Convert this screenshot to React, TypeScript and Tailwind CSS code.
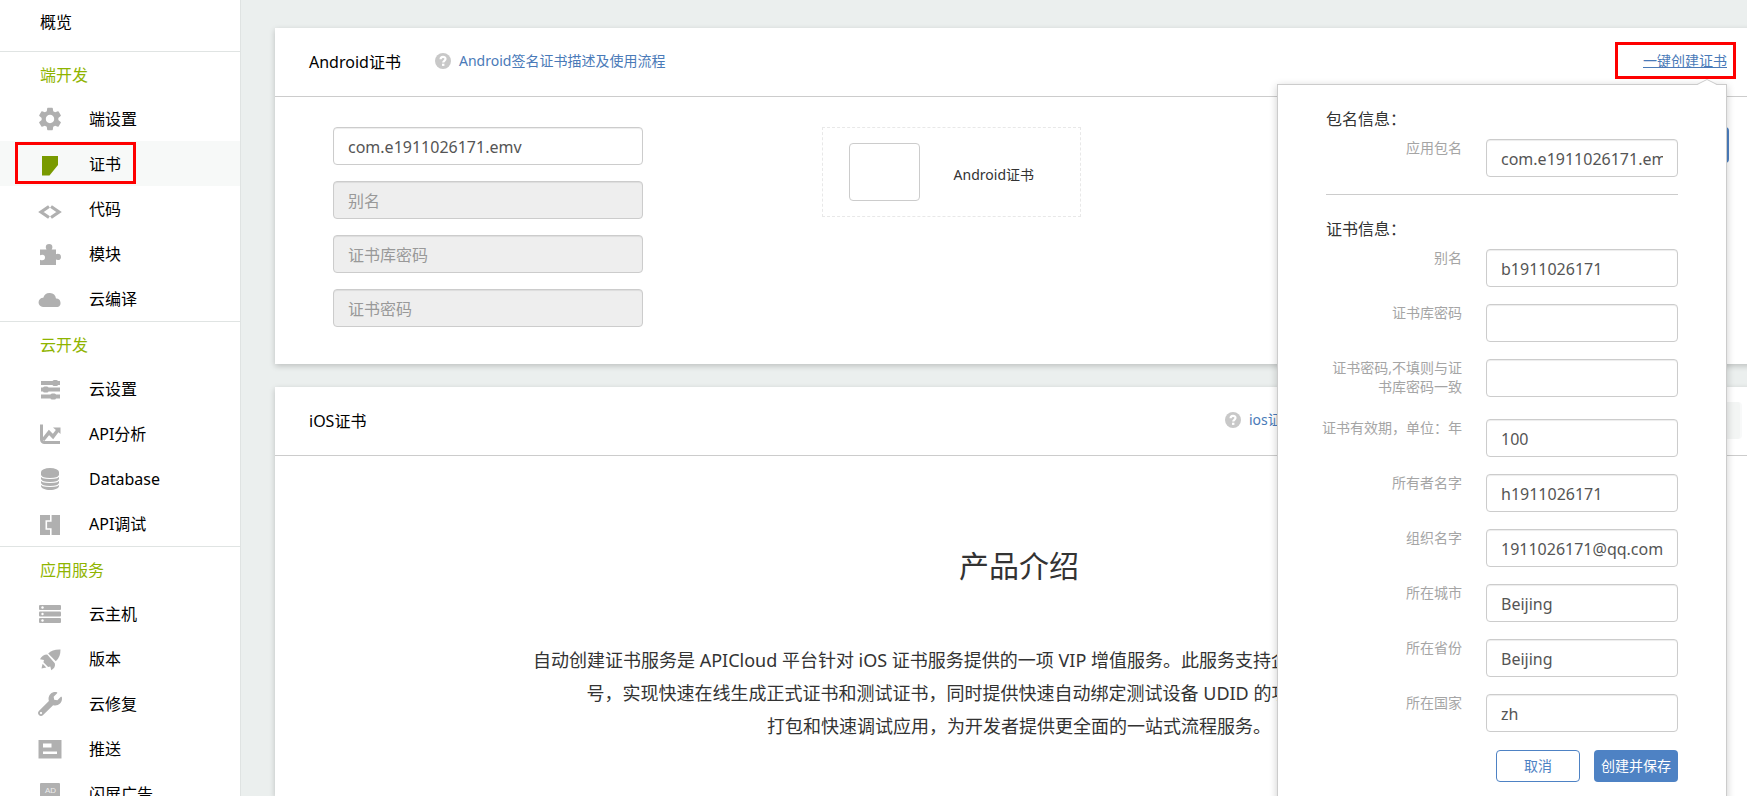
import type { ReactNode } from "react";
import { MdSettings } from "react-icons/md";
import { FaWrench } from "react-icons/fa";

type MenuItem = { label: string; icon: ReactNode };
type MenuGroup = { title: string; items: MenuItem[] };

const iconClass = "w-6 h-6";

const CertIcon = () => (
  <svg viewBox="0 0 24 24" className={iconClass}>
    <path d="M4 4h16v9l-8.500 10.500H4z" fill="#799a00" />
  </svg>
);

const CodeIcon = () => (
  <svg viewBox="0 0 24 24" className={iconClass} fill="none" stroke="#b0b0b0" strokeWidth="3.200">
    <path d="M11 9.500 3 15l8 5.500M13 9.500l8 5.500-8 5.500" />
  </svg>
);

const PuzzleIcon = () => (
  <svg viewBox="0 0 24 24" className={iconClass} fill="#b0b0b0">
    <path d="M2 7.500h6.500C8.300 6.800 7.800 6.200 7.800 5.200a3.300 3.300 0 0 1 6.600 0c0 1-.5 1.600-.7 2.300H18v4.800c.6-.2 1-.5 1.900-.5a3 3 0 0 1 0 6.200c-.9 0-1.300-.3-1.900-.5V23H2v-5.300c.7.3 1.300.6 2.200.6a2.800 2.800 0 0 0 0-5.600c-.9 0-1.500.3-2.200.6z" />
  </svg>
);

const CloudIcon = () => (
  <svg viewBox="0 0 24 24" className={iconClass} fill="#b0b0b0">
    <path d="M5 20a4.600 4.600 0 0 1 .3-9.200A6.500 6.500 0 0 1 18 11.600 4.300 4.300 0 0 1 19.500 20z" />
  </svg>
);

const SlidersIcon = () => (
  <svg viewBox="0 0 24 24" className={iconClass} fill="#b0b0b0">
    <path d="M3 4h19v4H3zM3 10.500h19v4H3zM3 17.500h19v4H3z" />
    <rect x="14.500" y="3" width="5.500" height="6" rx="1.500" />
    <rect x="5" y="9.500" width="5.500" height="6" rx="1.500" />
    <rect x="12.500" y="16.500" width="5.500" height="6" rx="1.500" />
  </svg>
);

const ChartIcon = () => (
  <svg viewBox="0 0 24 24" className={iconClass} fill="none" stroke="#b0b0b0" strokeWidth="3">
    <path d="M3.500 2.500v15a3 3 0 0 0 3 3H22" />
    <path d="m5 18 6-7.500 4 4L20 8" strokeWidth="3.600" />
    <path d="M15 5.500h7.500V12z" fill="#b0b0b0" stroke="none" />
  </svg>
);

const DatabaseIcon = () => (
  <svg viewBox="0 0 24 24" className={iconClass} fill="#b0b0b0">
    <path d="M3 5v14c0 2.200 4 4 9 4s9-1.800 9-4V5z" />
    <ellipse cx="12" cy="5" rx="9" ry="4" />
    <path
      d="M3 8.500c0 2 4 3 9 3s9-1 9-3M3 12.500c0 2 4 3 9 3s9-1 9-3M3 16.500c0 2 4 3 9 3s9-1 9-3"
      fill="none"
      stroke="#fff"
      strokeWidth="1.200"
    />
  </svg>
);

const DebugIcon = () => (
  <svg viewBox="0 0 24 24" className={iconClass}>
    <path d="M2 3h20v20H2z" fill="#b0b0b0" />
    <path d="M12.800 3v6H8.300v8h4.500v6" fill="none" stroke="#fff" strokeWidth="1.600" />
  </svg>
);

const ServerIcon = () => (
  <svg viewBox="0 0 24 24" className={iconClass}>
    <g fill="#b0b0b0">
      <rect x="1" y="3" width="22" height="5" rx="1" />
      <rect x="1" y="9.500" width="22" height="5" rx="1" />
      <rect x="1" y="16" width="22" height="5" rx="1" />
    </g>
    <g fill="#fff">
      <circle cx="4.500" cy="5.500" r="1.200" />
      <circle cx="4.500" cy="12" r="1.200" />
      <circle cx="4.500" cy="18.500" r="1.200" />
    </g>
  </svg>
);

const RocketIcon = () => (
  <svg viewBox="0 0 24 24" className={iconClass} fill="#b0b0b0">
    <path d="M22.500 2.500C17 2.300 13 3.600 10.200 6.600l7.600 7.600c3.500-3 4.700-7 4.700-11.700z" />
    <path d="M9.200 7.600C6 7.600 3.500 9.300 2 12.300l4 .8-.6 2.200 4.700 4.700 2.200-.6 1 3.800c3-1.600 4.300-4.200 3.500-7z" />
    <path d="M4.600 16.800 3.500 21.500l4.800-1z" />
  </svg>
);

const PushIcon = () => (
  <svg viewBox="0 0 24 24" className={iconClass}>
    <path d="M.5 3h23v18.500H.5z" fill="#b0b0b0" />
    <path d="M5 6.500h8.500v4H5zM5 14.500h14v2.500H5z" fill="#fff" />
  </svg>
);

const AdIcon = () => (
  <svg viewBox="0 0 24 24" className={iconClass}>
    <rect x="2" y="1" width="20" height="20" rx="1" fill="#b0b0b0" />
    <text x="12.500" y="10.500" textAnchor="middle" fontSize="8" fill="#eee" fontFamily="Liberation Sans, sans-serif">
      AD
    </text>
  </svg>
);

const HelpIcon = () => (
  <svg viewBox="0 0 16 16" className="w-4 h-4 shrink-0">
    <circle cx="8" cy="8" r="8" fill="#c8c8c8" />
    <path d="M5.600 6.300c0-3.200 4.900-3.100 4.900-.2 0 1.700-2.300 1.700-2.300 3.300" fill="none" stroke="#fff" strokeWidth="2.200" />
    <path d="M7 10.700h2.400v2.200H7z" fill="#fff" />
  </svg>
);

const groups: MenuGroup[] = [
  {
    title: "端开发",
    items: [
      { label: "端设置", icon: <MdSettings className="w-7 h-7" /> },
      { label: "证书", icon: <CertIcon /> },
      { label: "代码", icon: <CodeIcon /> },
      { label: "模块", icon: <PuzzleIcon /> },
      { label: "云编译", icon: <CloudIcon /> },
    ],
  },
  {
    title: "云开发",
    items: [
      { label: "云设置", icon: <SlidersIcon /> },
      { label: "API分析", icon: <ChartIcon /> },
      { label: "Database", icon: <DatabaseIcon /> },
      { label: "API调试", icon: <DebugIcon /> },
    ],
  },
  {
    title: "应用服务",
    items: [
      { label: "云主机", icon: <ServerIcon /> },
      { label: "版本", icon: <RocketIcon /> },
      { label: "云修复", icon: <FaWrench className="w-6 h-6" /> },
      { label: "推送", icon: <PushIcon /> },
      { label: "闪屏广告", icon: <AdIcon /> },
    ],
  },
];

const certFields = [
  { id: "alias", label: "别名", value: "b1911026171" },
  { id: "store-password", label: "证书库密码", value: "" },
  { id: "key-password", label: "证书密码,不填则与证书库密码一致", value: "" },
  { id: "validity", label: "证书有效期，单位：年", value: "100" },
  { id: "owner", label: "所有者名字", value: "h1911026171" },
  { id: "organization", label: "组织名字", value: "1911026171@qq.com" },
  { id: "city", label: "所在城市", value: "Beijing" },
  { id: "province", label: "所在省份", value: "Beijing" },
  { id: "country", label: "所在国家", value: "zh" },
];

const inputClass =
  "h-[38px] rounded-[4px] border border-[#ccc] px-[14px] pt-px text-base text-[#555] shadow-[inset_0_1px_1px_rgba(0,0,0,0.075)] placeholder:text-[#999] disabled:bg-[#eee]";

function Sidebar() {
  return (
    <nav className="w-[241px] shrink-0 border-r border-[#dfe3e2] bg-white text-base text-black">
      <a href="#overview" className="mb-[7px] flex h-11 items-center pl-10">
        概览
      </a>
      {groups.map((group) => (
        <div key={group.title} className="border-t border-[#e0e4e3]">
          <p className="flex h-11 items-center pt-0.5 pl-10 text-[#8fb400]">{group.title}</p>
          <ul>
            {group.items.map((item) => (
              <li key={item.label} className={item.label === "证书" ? "relative bg-[#f7f9f8]" : ""}>
                <a href={`#${item.label}`} className="flex h-[45px] items-center pl-9">
                  <span className="mr-[25px] flex w-7 justify-center text-[#b0b0b0]">{item.icon}</span>
                  {item.label}
                </a>
                {item.label === "证书" && (
                  <span className="absolute top-px left-[15px] h-[42px] w-[121px] border-3 border-[#fe0000]" />
                )}
              </li>
            ))}
          </ul>
        </div>
      ))}
    </nav>
  );
}

function Field({ id, label, value }: { id: string; label: string; value: string }) {
  return (
    <div className="flex items-start justify-between">
      <label htmlFor={id} className="-mt-px mb-1.5 -ml-1 w-[140px] text-right text-sm leading-[19px] text-[#a5a5a5]">
        {label}
      </label>
      <input id={id} defaultValue={value} className={`${inputClass} w-48`} />
    </div>
  );
}

function CreateCertPopup() {
  return (
    <div className="absolute top-14 right-9 z-10 w-[450px] border border-[#ccc] bg-white px-12 pt-6 pb-16 shadow-[0_2px_8px_rgba(0,0,0,0.2)]">
      <svg viewBox="0 0 20 7" className="absolute -top-1.5 right-[9px] h-[7px] w-5">
        <path d="M0 6 10 .5 20 6v1H0z" fill="#fff" />
        <path d="M0 5.500 10 .5l10 5" fill="none" stroke="#ccc" />
      </svg>
      <p className="mb-2.5 text-base leading-5 text-[#333]">包名信息：</p>
      <Field id="package" label="应用包名" value="com.e1911026171.emv" />
      <hr className="mt-[17px] mb-6 border-[#ccc]" />
      <p className="mb-2.5 text-base leading-5 text-[#333]">证书信息：</p>
      <div className="flex flex-col gap-[17px]">
        {certFields.map((field) => (
          <Field key={field.id} {...field} />
        ))}
      </div>
      <div className="mt-[18px] flex justify-end gap-3.5 text-sm">
        <button className="h-8 w-[84px] rounded-[4px] border border-[#4e82c4] text-[#4e82c4]">取消</button>
        <button className="h-8 w-[84px] rounded-[4px] bg-[#4e82c4] text-white">创建并保存</button>
      </div>
    </div>
  );
}

function AndroidCard() {
  return (
    <section className="relative bg-white shadow-[0_2px_6px_rgba(0,0,0,0.2)]">
      <header className="flex h-[69px] items-center border-b border-[#ccc] pr-9 pb-0.5 pl-[34px] text-sm text-[#4a7ab8]">
        <h2 className="mr-[34px] w-[92px] pt-0.5 text-base whitespace-nowrap text-black">Android证书</h2>
        <HelpIcon />
        <a href="#android-help" className="ml-2">
          Android签名证书描述及使用流程
        </a>
        <a href="#create" className="ml-auto underline">
          一键创建证书
        </a>
      </header>
      <div className="grid grid-cols-[35%_1fr_auto] items-start pt-[30px] pr-[34px] pb-[37px] pl-[58px]">
        <div className="flex w-[310px] flex-col gap-4">
          <input aria-label="应用包名" defaultValue="com.e1911026171.emv" className={inputClass} />
          <input aria-label="别名" placeholder="别名" disabled className={inputClass} />
          <input aria-label="证书库密码" placeholder="证书库密码" disabled className={inputClass} />
          <input aria-label="证书密码" placeholder="证书密码" disabled className={inputClass} />
        </div>
        <div className="flex h-[90px] w-[259px] items-center border border-dashed border-[#e8e8e8] pl-[26px] text-sm text-[#333]">
          <span className="mr-[34px] h-[58px] w-[71px] rounded-[4px] border border-[#ccc]" />
          <span className="pt-1.5">Android证书</span>
        </div>
        <button aria-label="保存" className="h-9 w-24 rounded-[4px] bg-[#4e82c4]" />
      </div>
      <span className="absolute top-3.5 right-[27px] h-[37px] w-[121px] border-3 border-[#fe0000]" />
      <CreateCertPopup />
    </section>
  );
}

function IosCard() {
  return (
    <section className="grow bg-white shadow-[0_2px_6px_rgba(0,0,0,0.2)]">
      <header className="flex h-[69px] items-center border-b border-[#ccc] pr-[21px] pb-0.5 pl-[34px] text-sm text-[#4a7ab8]">
        <h2 className="mr-auto pt-0.5 text-base text-black">iOS证书</h2>
        <HelpIcon />
        <a href="#ios-help" className="ml-2 w-[162px] whitespace-nowrap">
          ios证书描述及使用流程
        </a>
        <button aria-label="iOS" className="ml-6 h-[37px] w-[307px] rounded-[4px] border-r-2 border-[#f8f9f9] bg-[#f3f5f4]" />
      </header>
      <div className="pt-[88px] text-center text-[#333]">
        <h3 className="mb-14 text-3xl leading-[44px]">产品介绍</h3>
        <p className="text-lg leading-[33px]">
          自动创建证书服务是 APICloud 平台针对 iOS 证书服务提供的一项 VIP 增值服务。此服务支持企业和个人用户苹果开发者账
          <br />
          号，实现快速在线生成正式证书和测试证书，同时提供快速自动绑定测试设备 UDID 的功能，方便开发者云端
          <br />
          打包和快速调试应用，为开发者提供更全面的一站式流程服务。
        </p>
      </div>
    </section>
  );
}

export default function App() {
  return (
    <div className="flex h-screen overflow-hidden bg-[#ebefee] font-['Noto_Sans','Noto_Sans_CJK_SC',sans-serif]">
      <Sidebar />
      <main className="-mr-4 flex min-w-0 grow flex-col gap-[23px] pt-7 pl-[34px]">
        <AndroidCard />
        <IosCard />
      </main>
    </div>
  );
}
